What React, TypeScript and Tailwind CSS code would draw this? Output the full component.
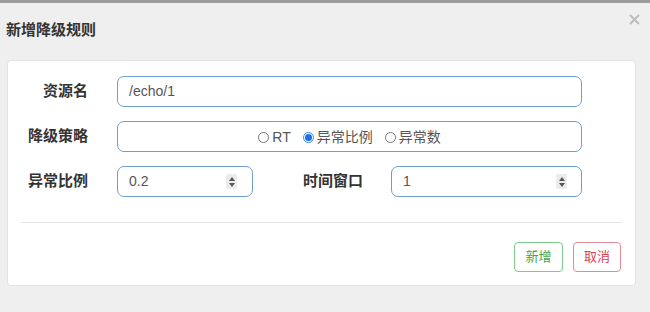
import React from "react";

const font = "font-['Liberation_Sans','Noto_Sans_CJK_SC',sans-serif]";

function Spinner() {
  return (
    <span className="flex h-[15px] w-[11px] flex-col items-center justify-center gap-[2px] rounded-[2px] bg-[#ebebeb]">
      <svg width="6" height="4" viewBox="0 0 6 4">
        <path d="M3 0 L6 4 L0 4 Z" fill="#555" />
      </svg>
      <svg width="6" height="4" viewBox="0 0 6 4">
        <path d="M0 0 L6 0 L3 4 Z" fill="#555" />
      </svg>
    </span>
  );
}

function Radio({ label, checked }: { label: string; checked?: boolean }) {
  return (
    <span className="flex items-center gap-[3px]">
      {checked ? (
        <span className="flex h-[11px] w-[11px] items-center justify-center rounded-full border border-[#3d84e6] bg-white">
          <span className="h-[7px] w-[7px] rounded-full bg-[#1f6fe0]" />
        </span>
      ) : (
        <span className="h-[11px] w-[11px] rounded-full border border-[#777] bg-white" />
      )}
      <span>{label}</span>
    </span>
  );
}

const inputBox =
  "flex h-[31px] items-center rounded-[7px] border border-[#6f9dcf] bg-white px-[11px] text-[14px] text-[#555]";

export default function App() {
  return (
    <div className={`h-[312px] w-[650px] overflow-hidden bg-[#efefef] ${font}`}>
      <div className="h-[3px] bg-[#9c9c9c]" />

      {/* Header */}
      <div className="flex h-[57px] items-start justify-between">
        <h1 className="ml-[6px] mt-[18px] text-[15px] font-bold leading-[17px] text-[#333]">
          新增降级规则
        </h1>
        <svg className="mr-[10px] mt-[11px]" width="11" height="11" viewBox="0 0 11 11">
          <path d="M1 1 L10 10 M10 1 L1 10" stroke="#bdbdbd" strokeWidth="2" />
        </svg>
      </div>

      {/* Card */}
      <div className="ml-[7px] h-[226px] w-[629px] rounded-[4px] border border-[#e3e3e3] bg-white">
        <div className="flex flex-col gap-[14px] pt-[15px]">
          <div className="flex items-center">
            <label className="w-[80px] text-right text-[15px] font-bold text-[#333]">资源名</label>
            <div className={`ml-[29px] w-[465px] ${inputBox}`}>/echo/1</div>
          </div>

          <div className="flex items-center">
            <label className="w-[80px] text-right text-[15px] font-bold text-[#333]">降级策略</label>
            <div className={`ml-[29px] w-[465px] justify-center gap-[12px] pt-[2px] ${inputBox}`}>
              <Radio label="RT" />
              <Radio label="异常比例" checked />
              <Radio label="异常数" />
            </div>
          </div>

          <div className="flex items-center">
            <label className="w-[80px] text-right text-[15px] font-bold text-[#333]">异常比例</label>
            <div className={`ml-[29px] w-[136px] justify-between pr-[15px] ${inputBox}`}>
              <span>0.2</span>
              <Spinner />
            </div>
            <label className="w-[110px] text-right text-[15px] font-bold text-[#333]">时间窗口</label>
            <div className={`ml-[28px] w-[191px] justify-between pr-[14px] ${inputBox}`}>
              <span>1</span>
              <Spinner />
            </div>
          </div>
        </div>

        <div className="mx-[13px] mt-[25px] h-px bg-[#e5e5e5]" />

        <div className="mr-[14px] mt-[19px] flex justify-end gap-[10px]">
          <button className="h-[30px] w-[49px] rounded-[4px] border border-[#7dc98e] bg-white text-[13px] text-[#3ea450]">
            新增
          </button>
          <button className="h-[30px] w-[48px] rounded-[4px] border border-[#e58a94] bg-white text-[13px] text-[#d9424f]">
            取消
          </button>
        </div>
      </div>
    </div>
  );
}
